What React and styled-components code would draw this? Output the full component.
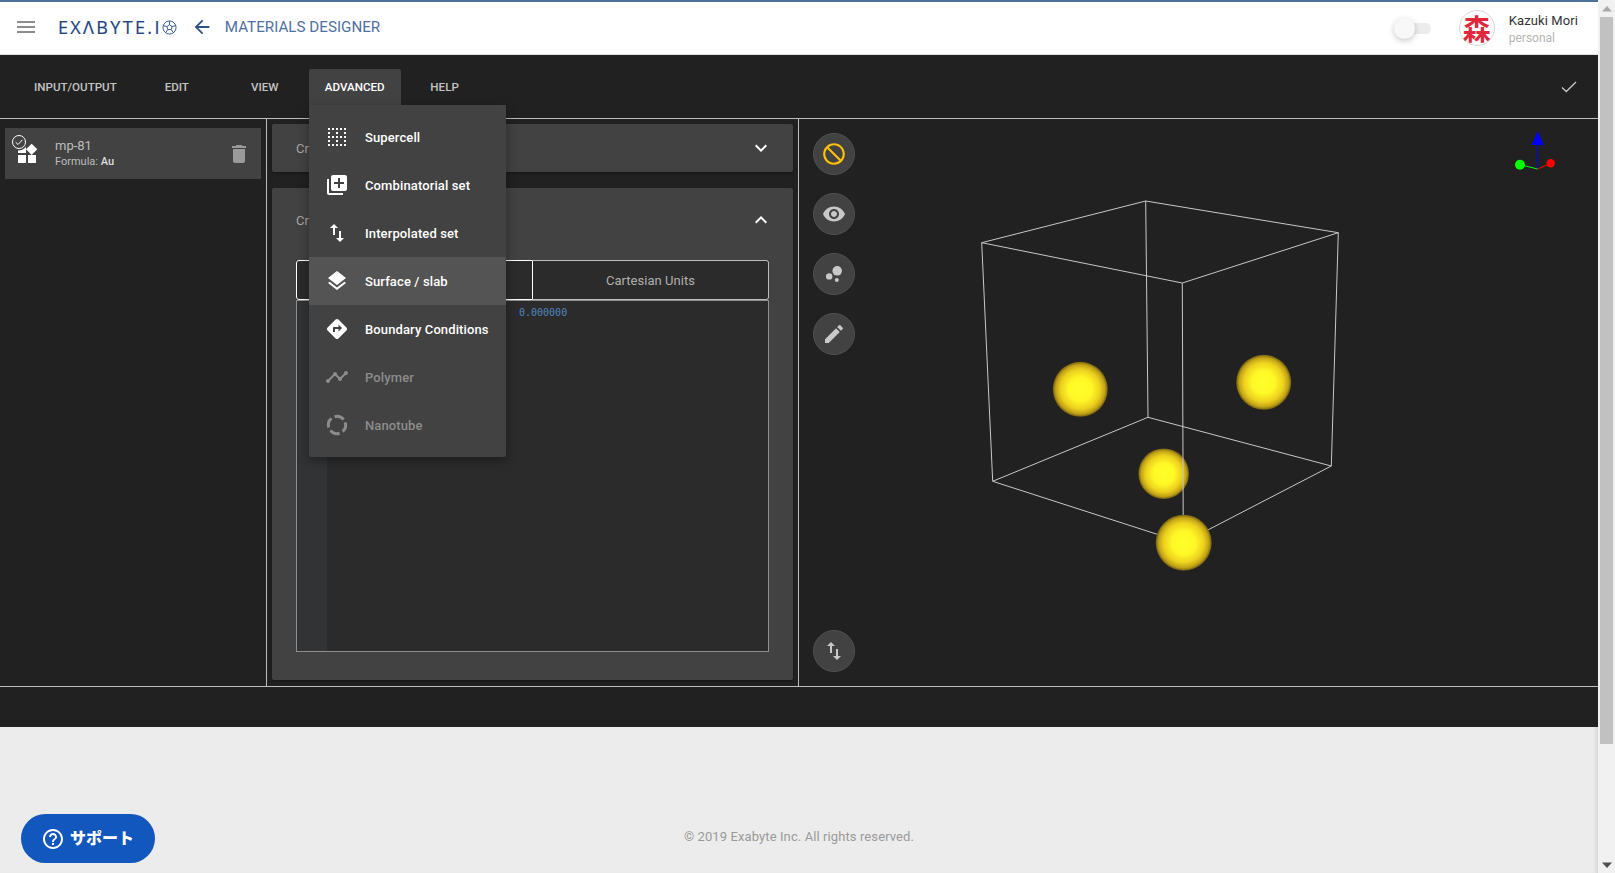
import React from "react";
import styled, { createGlobalStyle } from "styled-components";
import {
  MdMenu, MdArrowBack, MdWidgets, MdDelete, MdLibraryAdd, MdImportExport, MdLayers, MdDirections, MdBorderClear,
  MdTimeline, MdExpandMore, MdExpandLess, MdDoNotDisturb, MdVisibility, MdBubbleChart, MdEdit, MdHelpOutline,
} from "react-icons/md";

const Global = createGlobalStyle`
  html, body { margin: 0; padding: 0; height: 100%; overflow: hidden; background: #ececec; }
  * { box-sizing: border-box; }
  body { font-family: Roboto, "Liberation Sans", sans-serif; }
`;

const Page = styled.div`display: flex; width: 1615px; height: 873px; overflow: hidden;`;
const Main = styled.div`flex: 1; min-width: 0; display: flex; flex-direction: column; border-top: 2px solid #4f6f9f; position: relative;`;

const Header = styled.header`
  height: 53px; flex: none; background: #fff; border-bottom: 1px solid #dfe3e8;
  display: flex; align-items: center; padding: 0 0 0 14px;
`;
const HeaderLeft = styled.div`display: flex; align-items: center; margin-top: -2px;`;
const Burger = styled.div`display: flex; color: #8c8c8c;`;
const Logo = styled.span`
  margin-left: 20px; font-family: "Open Sans", sans-serif; font-size: 18px; letter-spacing: 2.35px;
  color: #1d4480; line-height: 1; font-weight: 400; -webkit-text-stroke: 0.2px #1d4480;
`;
const Back = styled.div`display: flex; color: #2c5288; margin-left: 14px;`;
const Crumb = styled.span`margin-left: 12px; font-size: 15.2px; color: #4f70a3; white-space: nowrap;`;
const HeaderRight = styled.div`margin-left: auto; display: flex; align-items: center; padding-right: 20px;`;
const Toggle = styled.div`width: 36px; height: 11px; border-radius: 6px; background: #ececec; position: relative; margin-right: 28px;`;
const Thumb = styled.div`
  position: absolute; left: -1px; top: -5px; width: 21px; height: 21px; border-radius: 50%; background: #f8f8f8;
  box-shadow: 0 2px 6px rgba(0,0,0,.22);
`;
const Avatar = styled.div`
  width: 36px; height: 36px; border-radius: 50%; border: 1px solid #d4d4d4; background: #fff; color: #e0283c;
  display: flex; align-items: center; justify-content: center; font-family: "Noto Sans CJK JP", sans-serif;
  font-weight: 700; font-size: 28px; line-height: 34px;
`;
const User = styled.div`margin-left: 14px; display: flex; flex-direction: column; gap: 2px; margin-top: 3px;`;
const UserName = styled.span`font-size: 13px; color: #333; line-height: 16px; letter-spacing: .1px;`;
const UserSub = styled.span`font-size: 12px; color: #b5b5b5; line-height: 15px;`;

const Toolbar = styled.nav`
  height: 64px; flex: none; background: #212121; border-bottom: 1px solid #bdbdbd;
  display: flex; align-items: flex-end; padding: 0 20px 13px 18px;
`;
const TabButton = styled.div`
  min-width: 88px; height: 36px; padding: 0 16px; display: flex; align-items: center; justify-content: center;
  font-size: 11.6px; font-weight: 500; color: ${p => (p.$open ? "#fff" : "#c4c4c4")};
  background: ${p => (p.$open ? "#424242" : "transparent")}; border-radius: 2px 2px 0 0; text-transform: uppercase;
`;
const Done = styled.div`margin-left: auto; display: flex; margin-bottom: 9px;`;

const Workspace = styled.div`height: 568px; flex: none; display: flex; background: #212121; border-bottom: 1px solid #bdbdbd;`;
const Sidebar = styled.aside`width: 267px; flex: none; border-right: 1px solid #bdbdbd; padding: 9px 5px;`;
const MaterialItem = styled.div`
  height: 51px; background: #424242; display: flex; align-items: center; padding: 0 10px; position: relative; color: #fff;
`;
const ItemCheck = styled.svg`position: absolute; left: 5px; top: 5px;`;
const ItemText = styled.div`margin-left: 16px; display: flex; flex-direction: column; margin-top: -1px;`;
const ItemName = styled.span`font-size: 13px; line-height: 18px; color: #bdbdbd;`;
const ItemSub = styled.span`font-size: 11px; line-height: 14px; color: #bdbdbd; b { font-weight: 500; color: #ddd; }`;
const Trash = styled.div`margin-left: auto; display: flex; color: #9a9a9a;`;

const Middle = styled.section`
  width: 532px; flex: none; border-right: 1px solid #bdbdbd; padding: 5px 5px 6px; display: flex; flex-direction: column; gap: 16px;
`;
const Panel = styled.div`
  background: #424242; box-shadow: 0 1px 3px rgba(0,0,0,.4); border-radius: 2px; display: flex; flex-direction: column;
  ${p => (p.$grow ? "flex: 1; min-height: 0; padding: 0 24px 28px;" : "height: 48px; padding: 0 24px;")}
`;
const PanelHead = styled.div`
  height: ${p => (p.$tall ? "64px" : "48px")}; flex: none; display: flex; align-items: center; justify-content: space-between;
  font-size: 13px; color: #a8a8a8;
`;
const Chevron = styled.span`display: flex; color: #fff; margin-right: -4px;`;
const Tabs = styled.div`display: flex; height: 40px; flex: none; margin-top: 8px; background: #2b2b2b;`;
const UnitTab = styled.div`
  flex: 1; display: flex; align-items: center; justify-content: center; font-size: 13px; color: #b0b0b0; letter-spacing: .05px;
  border: 1px solid ${p => (p.$active ? "#fff" : "#bdbdbd")};
  border-radius: ${p => (p.$active ? "3px 0 0 3px" : "0 3px 3px 0")};
  ${p => (p.$active ? "" : "border-left: 0;")}
`;
const Editor = styled.div`flex: 1; display: flex; border: 1px solid #8f8f8f; background: #2b2b2b; min-height: 0;`;
const Gutter = styled.div`width: 30px; background: #313335; flex: none;`;
const Code = styled.div`
  padding: 5px 0 0 192px; font-family: "DejaVu Sans Mono", "Liberation Mono", monospace; font-size: 10px;
  line-height: 14px; color: #4f86bf;
`;

const Viewer = styled.section`flex: 1; min-width: 0; position: relative; display: flex; flex-direction: column; gap: 18px; padding: 14px 0 14px 14px;`;
const Scene = styled.svg`position: absolute; left: 0; top: 0;`;
const RoundButton = styled.div`
  width: 42px; height: 42px; border-radius: 50%; background: #424242; border: 1px solid #505050; position: relative;
  display: flex; align-items: center; justify-content: center; color: ${p => p.$color || "#c8c8c8"};
  ${p => p.$bottom && "margin-top: auto;"}
`;

const Menu = styled.div`
  position: absolute; left: 309px; top: 103px; width: 197px; padding: 8px 0; background: #424242; z-index: 5;
  box-shadow: 0 4px 12px rgba(0,0,0,.35); border-radius: 0 0 2px 2px;
`;
const MenuRow = styled.div`
  height: 48px; display: flex; align-items: center; padding-left: 16px; gap: 16px;
  background: ${p => (p.$hover ? "#545454" : "transparent")};
  color: ${p => (p.$disabled ? "#8c8c8c" : "#fff")};
  font-size: 13px; font-weight: 500; white-space: nowrap; letter-spacing: .12px;
`;
const MenuIcon = styled.span`width: 24px; height: 24px; display: flex; align-items: center; justify-content: center;`;

const Strip = styled.div`height: 40px; flex: none; background: #212121;`;
const Footer = styled.footer`
  flex: 1; background: #ececec; display: flex; align-items: flex-end; justify-content: center; padding-bottom: 29px;
  font-size: 13px; letter-spacing: .1px; color: #9a9a9a; box-shadow: inset -5px 0 5px -4px rgba(0,0,0,.14);
`;
const Support = styled.div`
  position: absolute; left: 21px; top: 812px; width: 134px; height: 49px; border-radius: 25px; background: #1157bd; color: #fff;
  display: flex; align-items: center; padding-left: 20px; gap: 5px;
  font-family: "Noto Sans CJK JP", sans-serif; font-weight: 900; font-size: 16px; line-height: 1;
`;
const SupportLabel = styled.span`margin-top: -3px;`;

const ScrollTrack = styled.div`width: 17px; flex: none; background: #f1f1f1; display: flex; flex-direction: column; align-items: center;`;
const ScrollArrow = styled.div`
  height: 17px; flex: none; display: flex; align-items: center; justify-content: center;
`;
const ScrollThumb = styled.div`width: 13px; height: 727px; background: #c1c1c1; flex: none;`;
const ScrollSpace = styled.div`flex: 1;`;

const RingIcon = () => (
  <svg width="24" height="24" viewBox="0 0 24 24">
    <circle cx="12" cy="12" r="8.6" fill="none" stroke="#8c8c8c" strokeWidth="3" strokeDasharray="10 3.5" transform="rotate(-18 12 12)" />
  </svg>
);
const GlobeIcon = () => (
  <svg width="15" height="15" viewBox="0 0 16 16" fill="none" stroke="#1d4480" strokeWidth=".9">
    <circle cx="8" cy="8" r="7" />
    <path d="M8 5l2.8 2-1 3.2H6.2l-1-3.2zM8 5V1.2M10.8 7l3.8-1M9.8 10.2l2.2 3.2M6.2 10.2L4 13.4M5.2 7L1.4 6" />
  </svg>
);

const Ball = ({ cx, cy, r }) => <circle cx={cx} cy={cy} r={r} fill="url(#gold)" />;

const menuItems = [
  { label: "Supercell", icon: <MdBorderClear size={24} /> },
  { label: "Combinatorial set", icon: <MdLibraryAdd size={24} /> },
  { label: "Interpolated set", icon: <MdImportExport size={26} /> },
  { label: "Surface / slab", icon: <MdLayers size={24} />, hover: true },
  { label: "Boundary Conditions", icon: <MdDirections size={26} /> },
  { label: "Polymer", icon: <MdTimeline size={26} />, disabled: true },
  { label: "Nanotube", icon: <RingIcon />, disabled: true },
];

export default function App() {
  return (
    <Page>
      <Global />
      <Main>
        <Header>
          <HeaderLeft>
            <Burger><MdMenu size={24} /></Burger>
            <Logo>EXΛBYTE.I</Logo>
            <GlobeIcon />
            <Back><MdArrowBack size={22} /></Back>
            <Crumb>MATERIALS DESIGNER</Crumb>
          </HeaderLeft>
          <HeaderRight>
            <Toggle><Thumb /></Toggle>
            <Avatar>森</Avatar>
            <User>
              <UserName>Kazuki Mori</UserName>
              <UserSub>personal</UserSub>
            </User>
          </HeaderRight>
        </Header>

        <Toolbar>
          <TabButton>Input/Output</TabButton>
          <TabButton>Edit</TabButton>
          <TabButton>View</TabButton>
          <TabButton $open>Advanced</TabButton>
          <TabButton>Help</TabButton>
          <Done>
            <svg width="18" height="18" viewBox="0 0 18 18" fill="none" stroke="#c8c8c8" strokeWidth="1.3">
              <path d="M2 9.5l4.3 4L16 4" />
            </svg>
          </Done>
        </Toolbar>

        <Menu>
          {menuItems.map(m => (
            <MenuRow key={m.label} $hover={m.hover} $disabled={m.disabled}>
              <MenuIcon>{m.icon}</MenuIcon>
              {m.label}
            </MenuRow>
          ))}
        </Menu>

        <Workspace>
          <Sidebar>
            <MaterialItem>
              <MdWidgets size={24} />
              <ItemCheck width="18" height="18" viewBox="0 0 18 18">
                <circle cx="9" cy="9" r="8.5" fill="#424242" />
                <circle cx="9" cy="9" r="6.5" fill="#424242" stroke="#fff" strokeWidth="1" />
                <path d="M5.6 9.2l2.4 2.3 4.4-4.6" fill="none" stroke="#fff" strokeWidth="1" />
              </ItemCheck>
              <ItemText>
                <ItemName>mp-81</ItemName>
                <ItemSub>Formula: <b>Au</b></ItemSub>
              </ItemText>
              <Trash><MdDelete size={24} /></Trash>
            </MaterialItem>
          </Sidebar>

          <Middle>
            <Panel>
              <PanelHead>Crystal Lattice<Chevron><MdExpandMore size={24} /></Chevron></PanelHead>
            </Panel>
            <Panel $grow>
              <PanelHead $tall>Crystal Basis<Chevron><MdExpandLess size={24} /></Chevron></PanelHead>
              <Tabs>
                <UnitTab $active />
                <UnitTab>Cartesian Units</UnitTab>
              </Tabs>
              <Editor>
                <Gutter />
                <Code>0.000000</Code>
              </Editor>
            </Panel>
          </Middle>

          <Viewer>
            <Scene width="799" height="567" viewBox="799 119 799 567">
              <defs>
                <radialGradient id="gold" cx="50%" cy="50%" r="50%">
                  <stop offset="0%" stopColor="#ffff2a" />
                  <stop offset="42%" stopColor="#fff826" />
                  <stop offset="72%" stopColor="#ecd01e" />
                  <stop offset="90%" stopColor="#bfa016" />
                  <stop offset="100%" stopColor="#6e5c10" />
                </radialGradient>
              </defs>
              <Ball cx={1080.3} cy={389.3} r={27.5} />
              <Ball cx={1263.7} cy={382.3} r={27.5} />
              <Ball cx={1163.7} cy={473.7} r={25.3} />
              <g fill="none" stroke="#c8c8c8" strokeWidth="1">
                <path d="M981.7 242.7L1145.7 201L1338.3 232.7L1182.3 283Z" />
                <path d="M992.7 481.3L1148 417.3L1331.3 466L1183.3 542.7Z" />
                <path d="M981.7 242.7L992.7 481.3M1145.7 201L1148 417.3M1338.3 232.7L1331.3 466M1182.3 283L1183.3 542.7" />
              </g>
              <Ball cx={1183.7} cy={542.7} r={28} />
              <path d="M1537.7 145V169" stroke="#0000ff" strokeWidth="1" />
              <path d="M1537.7 131l6 14h-12z" fill="#0000ff" />
              <path d="M1537.7 169L1520 164.7" stroke="#00ff00" strokeWidth="1" />
              <circle cx="1520" cy="164.7" r="5" fill="#00ff00" />
              <path d="M1537.7 169L1550.7 163.3" stroke="#ff0000" strokeWidth="1" />
              <circle cx="1550.7" cy="163.3" r="4.2" fill="#ff0000" />
            </Scene>
            <RoundButton $color="#ffc107"><MdDoNotDisturb size={26} /></RoundButton>
            <RoundButton><MdVisibility size={24} /></RoundButton>
            <RoundButton><MdBubbleChart size={24} /></RoundButton>
            <RoundButton><MdEdit size={24} /></RoundButton>
            <RoundButton $bottom><MdImportExport size={24} /></RoundButton>
          </Viewer>
        </Workspace>

        <Strip />
        <Footer>© 2019 Exabyte Inc. All rights reserved.</Footer>
        <Support><MdHelpOutline size={24} /><SupportLabel>サポート</SupportLabel></Support>
      </Main>

      <ScrollTrack>
        <ScrollArrow>
          <svg width="10" height="6"><path d="M5 0l5 5.5H0z" fill="#a8a8a8" /></svg>
        </ScrollArrow>
        <ScrollThumb />
        <ScrollSpace />
        <ScrollArrow>
          <svg width="10" height="6"><path d="M5 6L0 .5h10z" fill="#505050" /></svg>
        </ScrollArrow>
      </ScrollTrack>
    </Page>
  );
}
